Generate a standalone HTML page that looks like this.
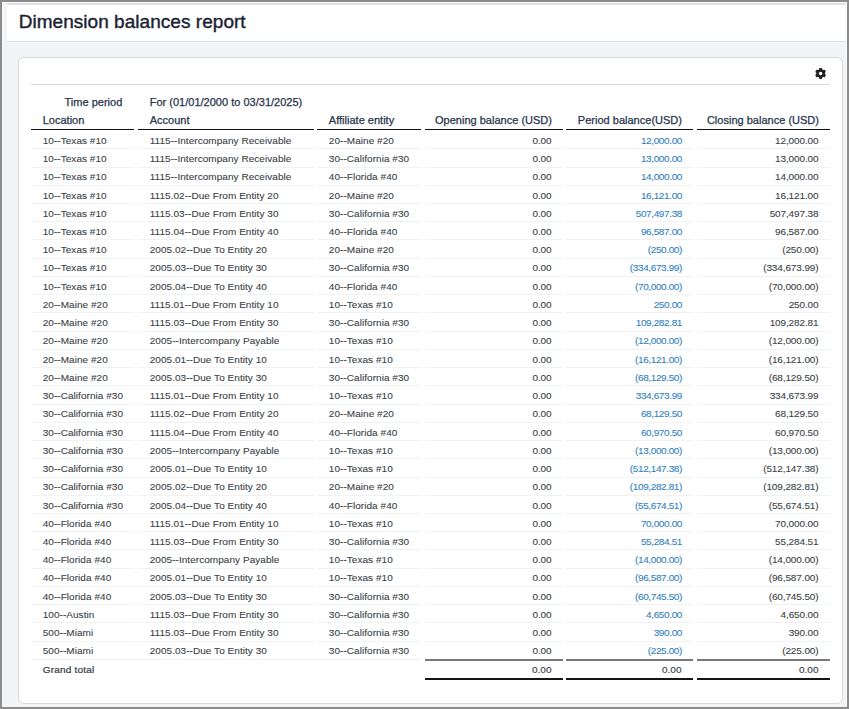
<!DOCTYPE html>
<html><head><meta charset="utf-8"><style>
html,body{margin:0;padding:0;}
body{width:849px;height:709px;position:relative;overflow:hidden;background:#8c8c8c;font-family:"Liberation Sans",sans-serif;}
.page{position:absolute;left:2px;top:2px;width:845px;height:705px;background:#f3f4f6;}
.hdr{position:absolute;left:7px;top:3px;width:839px;height:39px;background:#fff;}
.t{position:absolute;white-space:nowrap;line-height:1;}
.b{position:absolute;}
.card{position:absolute;left:18px;top:57px;width:825px;height:647px;box-sizing:border-box;border:1px solid #d6dadc;border-radius:6px;background:#fff;}
.gear{position:absolute;left:812px;top:65px;}
</style></head><body>
<div class="page"></div>
<div class="b" style="left:2px;top:2px;width:845px;height:1px;background:#fbfbfb"></div>
<div class="b" style="left:2px;top:2px;width:1px;height:705px;background:#f8f8f9"></div>
<div class="hdr"></div>
<div class="b" style="left:7px;top:3px;width:839px;height:2px;background:#e0e3e6"></div>
<div class="b" style="left:7px;top:41px;width:839px;height:1px;background:#dde4e5"></div>
<div class="b" style="left:846px;top:2px;width:1px;height:705px;background:#fafbfb"></div>
<div class="t" style="left:18.7px;top:11.82px;font-size:19px;color:#1b2333;-webkit-text-stroke:0.4px currentColor;letter-spacing:0.04px;">Dimension balances report</div>
<div class="card"></div>
<div class="b" style="left:31px;top:84px;width:799px;height:1px;background:#d6d8db"></div>
<svg class="gear" width="16" height="16" viewBox="-8 -8 16 16">
<g transform="translate(0.60,0.45)"><g fill="#222">
<circle r="4.3"/>
<rect x="-1.6" y="-5.5" width="3.2" height="11.0" rx="1.0"/>
<rect x="-1.6" y="-5.5" width="3.2" height="11.0" rx="1.0" transform="rotate(60)"/>
<rect x="-1.6" y="-5.5" width="3.2" height="11.0" rx="1.0" transform="rotate(120)"/>
</g><circle r="1.7" fill="#fff"/></g></svg>
<div class="t" style="left:64.50px;top:96.99px;font-size:11px;color:#27324a;font-weight:400;-webkit-text-stroke:0.25px currentColor;letter-spacing:0.01px;">Time period</div>
<div class="t" style="left:149.70px;top:96.99px;font-size:11px;color:#27324a;font-weight:400;-webkit-text-stroke:0.25px currentColor;letter-spacing:0.01px;">For (01/01/2000 to 03/31/2025)</div>
<div class="t" style="left:42.70px;top:115.19px;font-size:11px;color:#27324a;font-weight:400;-webkit-text-stroke:0.25px currentColor;letter-spacing:0.01px;">Location</div>
<div class="b" style="left:31.00px;top:128.70px;width:103.20px;height:1.60px;background:#111"></div>
<div class="t" style="left:149.70px;top:115.19px;font-size:11px;color:#27324a;font-weight:400;-webkit-text-stroke:0.25px currentColor;letter-spacing:0.01px;">Account</div>
<div class="b" style="left:138.00px;top:128.70px;width:175.70px;height:1.60px;background:#111"></div>
<div class="t" style="left:328.80px;top:115.19px;font-size:11px;color:#27324a;font-weight:400;-webkit-text-stroke:0.25px currentColor;letter-spacing:0.01px;">Affiliate entity</div>
<div class="b" style="left:317.10px;top:128.70px;width:103.70px;height:1.60px;background:#111"></div>
<div class="t r" style="right:297.00px;top:115.19px;font-size:11px;color:#27324a;font-weight:400;-webkit-text-stroke:0.25px currentColor;letter-spacing:0.01px;">Opening balance (USD)</div>
<div class="b" style="left:424.90px;top:128.70px;width:138.10px;height:1.60px;background:#111"></div>
<div class="t r" style="right:167.00px;top:115.19px;font-size:11px;color:#27324a;font-weight:400;-webkit-text-stroke:0.25px currentColor;letter-spacing:0.01px;">Period balance(USD)</div>
<div class="b" style="left:566.10px;top:128.70px;width:126.90px;height:1.60px;background:#111"></div>
<div class="t r" style="right:30.00px;top:115.19px;font-size:11px;color:#27324a;font-weight:400;-webkit-text-stroke:0.25px currentColor;letter-spacing:0.01px;">Closing balance (USD)</div>
<div class="b" style="left:697.00px;top:128.70px;width:133.00px;height:1.60px;background:#111"></div>
<div class="t" style="left:42.70px;top:135.84px;font-size:10px;color:#3a3f46;font-weight:400;-webkit-text-stroke:0.1px currentColor;letter-spacing:0.05px;transform:scaleY(0.88);transform-origin:0 8.46px;">10--Texas #10</div>
<div class="t" style="left:149.70px;top:135.84px;font-size:10px;color:#3a3f46;font-weight:400;-webkit-text-stroke:0.1px currentColor;letter-spacing:0.05px;transform:scaleY(0.88);transform-origin:0 8.46px;">1115--Intercompany Receivable</div>
<div class="t" style="left:328.80px;top:135.84px;font-size:10px;color:#3a3f46;font-weight:400;-webkit-text-stroke:0.1px currentColor;letter-spacing:0.05px;transform:scaleY(0.88);transform-origin:0 8.46px;">20--Maine #20</div>
<div class="t r" style="right:297.50px;top:135.84px;font-size:10px;color:#3a3f46;font-weight:400;-webkit-text-stroke:0.1px currentColor;letter-spacing:-0.12px;transform:scaleY(0.88);transform-origin:0 8.46px;">0.00</div>
<div class="t r" style="right:167.00px;top:135.84px;font-size:10px;color:#2f7fc0;font-weight:400;letter-spacing:-0.38px;-webkit-text-stroke:0.1px currentColor;transform:scaleY(0.88);transform-origin:0 8.46px;">12,000.00</div>
<div class="t r" style="right:30.50px;top:135.84px;font-size:10px;color:#3a3f46;font-weight:400;-webkit-text-stroke:0.1px currentColor;letter-spacing:-0.12px;transform:scaleY(0.88);transform-origin:0 8.46px;">12,000.00</div>
<div class="b" style="left:31.00px;top:148.30px;width:103.20px;height:1.00px;background:#f0f2f4"></div>
<div class="b" style="left:138.00px;top:148.30px;width:175.70px;height:1.00px;background:#f0f2f4"></div>
<div class="b" style="left:317.10px;top:148.30px;width:103.70px;height:1.00px;background:#f0f2f4"></div>
<div class="b" style="left:424.90px;top:148.30px;width:138.10px;height:1.00px;background:#f0f2f4"></div>
<div class="b" style="left:566.10px;top:148.30px;width:126.90px;height:1.00px;background:#f0f2f4"></div>
<div class="b" style="left:697.00px;top:148.30px;width:133.00px;height:1.00px;background:#f0f2f4"></div>
<div class="t" style="left:42.70px;top:154.07px;font-size:10px;color:#3a3f46;font-weight:400;-webkit-text-stroke:0.1px currentColor;letter-spacing:0.05px;transform:scaleY(0.88);transform-origin:0 8.46px;">10--Texas #10</div>
<div class="t" style="left:149.70px;top:154.07px;font-size:10px;color:#3a3f46;font-weight:400;-webkit-text-stroke:0.1px currentColor;letter-spacing:0.05px;transform:scaleY(0.88);transform-origin:0 8.46px;">1115--Intercompany Receivable</div>
<div class="t" style="left:328.80px;top:154.07px;font-size:10px;color:#3a3f46;font-weight:400;-webkit-text-stroke:0.1px currentColor;letter-spacing:0.05px;transform:scaleY(0.88);transform-origin:0 8.46px;">30--California #30</div>
<div class="t r" style="right:297.50px;top:154.07px;font-size:10px;color:#3a3f46;font-weight:400;-webkit-text-stroke:0.1px currentColor;letter-spacing:-0.12px;transform:scaleY(0.88);transform-origin:0 8.46px;">0.00</div>
<div class="t r" style="right:167.00px;top:154.07px;font-size:10px;color:#2f7fc0;font-weight:400;letter-spacing:-0.38px;-webkit-text-stroke:0.1px currentColor;transform:scaleY(0.88);transform-origin:0 8.46px;">13,000.00</div>
<div class="t r" style="right:30.50px;top:154.07px;font-size:10px;color:#3a3f46;font-weight:400;-webkit-text-stroke:0.1px currentColor;letter-spacing:-0.12px;transform:scaleY(0.88);transform-origin:0 8.46px;">13,000.00</div>
<div class="b" style="left:31.00px;top:166.54px;width:103.20px;height:1.00px;background:#f0f2f4"></div>
<div class="b" style="left:138.00px;top:166.54px;width:175.70px;height:1.00px;background:#f0f2f4"></div>
<div class="b" style="left:317.10px;top:166.54px;width:103.70px;height:1.00px;background:#f0f2f4"></div>
<div class="b" style="left:424.90px;top:166.54px;width:138.10px;height:1.00px;background:#f0f2f4"></div>
<div class="b" style="left:566.10px;top:166.54px;width:126.90px;height:1.00px;background:#f0f2f4"></div>
<div class="b" style="left:697.00px;top:166.54px;width:133.00px;height:1.00px;background:#f0f2f4"></div>
<div class="t" style="left:42.70px;top:172.31px;font-size:10px;color:#3a3f46;font-weight:400;-webkit-text-stroke:0.1px currentColor;letter-spacing:0.05px;transform:scaleY(0.88);transform-origin:0 8.46px;">10--Texas #10</div>
<div class="t" style="left:149.70px;top:172.31px;font-size:10px;color:#3a3f46;font-weight:400;-webkit-text-stroke:0.1px currentColor;letter-spacing:0.05px;transform:scaleY(0.88);transform-origin:0 8.46px;">1115--Intercompany Receivable</div>
<div class="t" style="left:328.80px;top:172.31px;font-size:10px;color:#3a3f46;font-weight:400;-webkit-text-stroke:0.1px currentColor;letter-spacing:0.05px;transform:scaleY(0.88);transform-origin:0 8.46px;">40--Florida #40</div>
<div class="t r" style="right:297.50px;top:172.31px;font-size:10px;color:#3a3f46;font-weight:400;-webkit-text-stroke:0.1px currentColor;letter-spacing:-0.12px;transform:scaleY(0.88);transform-origin:0 8.46px;">0.00</div>
<div class="t r" style="right:167.00px;top:172.31px;font-size:10px;color:#2f7fc0;font-weight:400;letter-spacing:-0.38px;-webkit-text-stroke:0.1px currentColor;transform:scaleY(0.88);transform-origin:0 8.46px;">14,000.00</div>
<div class="t r" style="right:30.50px;top:172.31px;font-size:10px;color:#3a3f46;font-weight:400;-webkit-text-stroke:0.1px currentColor;letter-spacing:-0.12px;transform:scaleY(0.88);transform-origin:0 8.46px;">14,000.00</div>
<div class="b" style="left:31.00px;top:184.77px;width:103.20px;height:1.00px;background:#f0f2f4"></div>
<div class="b" style="left:138.00px;top:184.77px;width:175.70px;height:1.00px;background:#f0f2f4"></div>
<div class="b" style="left:317.10px;top:184.77px;width:103.70px;height:1.00px;background:#f0f2f4"></div>
<div class="b" style="left:424.90px;top:184.77px;width:138.10px;height:1.00px;background:#f0f2f4"></div>
<div class="b" style="left:566.10px;top:184.77px;width:126.90px;height:1.00px;background:#f0f2f4"></div>
<div class="b" style="left:697.00px;top:184.77px;width:133.00px;height:1.00px;background:#f0f2f4"></div>
<div class="t" style="left:42.70px;top:190.54px;font-size:10px;color:#3a3f46;font-weight:400;-webkit-text-stroke:0.1px currentColor;letter-spacing:0.05px;transform:scaleY(0.88);transform-origin:0 8.46px;">10--Texas #10</div>
<div class="t" style="left:149.70px;top:190.54px;font-size:10px;color:#3a3f46;font-weight:400;-webkit-text-stroke:0.1px currentColor;letter-spacing:0.05px;transform:scaleY(0.88);transform-origin:0 8.46px;">1115.02--Due From Entity 20</div>
<div class="t" style="left:328.80px;top:190.54px;font-size:10px;color:#3a3f46;font-weight:400;-webkit-text-stroke:0.1px currentColor;letter-spacing:0.05px;transform:scaleY(0.88);transform-origin:0 8.46px;">20--Maine #20</div>
<div class="t r" style="right:297.50px;top:190.54px;font-size:10px;color:#3a3f46;font-weight:400;-webkit-text-stroke:0.1px currentColor;letter-spacing:-0.12px;transform:scaleY(0.88);transform-origin:0 8.46px;">0.00</div>
<div class="t r" style="right:167.00px;top:190.54px;font-size:10px;color:#2f7fc0;font-weight:400;letter-spacing:-0.38px;-webkit-text-stroke:0.1px currentColor;transform:scaleY(0.88);transform-origin:0 8.46px;">16,121.00</div>
<div class="t r" style="right:30.50px;top:190.54px;font-size:10px;color:#3a3f46;font-weight:400;-webkit-text-stroke:0.1px currentColor;letter-spacing:-0.12px;transform:scaleY(0.88);transform-origin:0 8.46px;">16,121.00</div>
<div class="b" style="left:31.00px;top:203.01px;width:103.20px;height:1.00px;background:#f0f2f4"></div>
<div class="b" style="left:138.00px;top:203.01px;width:175.70px;height:1.00px;background:#f0f2f4"></div>
<div class="b" style="left:317.10px;top:203.01px;width:103.70px;height:1.00px;background:#f0f2f4"></div>
<div class="b" style="left:424.90px;top:203.01px;width:138.10px;height:1.00px;background:#f0f2f4"></div>
<div class="b" style="left:566.10px;top:203.01px;width:126.90px;height:1.00px;background:#f0f2f4"></div>
<div class="b" style="left:697.00px;top:203.01px;width:133.00px;height:1.00px;background:#f0f2f4"></div>
<div class="t" style="left:42.70px;top:208.78px;font-size:10px;color:#3a3f46;font-weight:400;-webkit-text-stroke:0.1px currentColor;letter-spacing:0.05px;transform:scaleY(0.88);transform-origin:0 8.46px;">10--Texas #10</div>
<div class="t" style="left:149.70px;top:208.78px;font-size:10px;color:#3a3f46;font-weight:400;-webkit-text-stroke:0.1px currentColor;letter-spacing:0.05px;transform:scaleY(0.88);transform-origin:0 8.46px;">1115.03--Due From Entity 30</div>
<div class="t" style="left:328.80px;top:208.78px;font-size:10px;color:#3a3f46;font-weight:400;-webkit-text-stroke:0.1px currentColor;letter-spacing:0.05px;transform:scaleY(0.88);transform-origin:0 8.46px;">30--California #30</div>
<div class="t r" style="right:297.50px;top:208.78px;font-size:10px;color:#3a3f46;font-weight:400;-webkit-text-stroke:0.1px currentColor;letter-spacing:-0.12px;transform:scaleY(0.88);transform-origin:0 8.46px;">0.00</div>
<div class="t r" style="right:167.00px;top:208.78px;font-size:10px;color:#2f7fc0;font-weight:400;letter-spacing:-0.38px;-webkit-text-stroke:0.1px currentColor;transform:scaleY(0.88);transform-origin:0 8.46px;">507,497.38</div>
<div class="t r" style="right:30.50px;top:208.78px;font-size:10px;color:#3a3f46;font-weight:400;-webkit-text-stroke:0.1px currentColor;letter-spacing:-0.12px;transform:scaleY(0.88);transform-origin:0 8.46px;">507,497.38</div>
<div class="b" style="left:31.00px;top:221.24px;width:103.20px;height:1.00px;background:#f0f2f4"></div>
<div class="b" style="left:138.00px;top:221.24px;width:175.70px;height:1.00px;background:#f0f2f4"></div>
<div class="b" style="left:317.10px;top:221.24px;width:103.70px;height:1.00px;background:#f0f2f4"></div>
<div class="b" style="left:424.90px;top:221.24px;width:138.10px;height:1.00px;background:#f0f2f4"></div>
<div class="b" style="left:566.10px;top:221.24px;width:126.90px;height:1.00px;background:#f0f2f4"></div>
<div class="b" style="left:697.00px;top:221.24px;width:133.00px;height:1.00px;background:#f0f2f4"></div>
<div class="t" style="left:42.70px;top:227.01px;font-size:10px;color:#3a3f46;font-weight:400;-webkit-text-stroke:0.1px currentColor;letter-spacing:0.05px;transform:scaleY(0.88);transform-origin:0 8.46px;">10--Texas #10</div>
<div class="t" style="left:149.70px;top:227.01px;font-size:10px;color:#3a3f46;font-weight:400;-webkit-text-stroke:0.1px currentColor;letter-spacing:0.05px;transform:scaleY(0.88);transform-origin:0 8.46px;">1115.04--Due From Entity 40</div>
<div class="t" style="left:328.80px;top:227.01px;font-size:10px;color:#3a3f46;font-weight:400;-webkit-text-stroke:0.1px currentColor;letter-spacing:0.05px;transform:scaleY(0.88);transform-origin:0 8.46px;">40--Florida #40</div>
<div class="t r" style="right:297.50px;top:227.01px;font-size:10px;color:#3a3f46;font-weight:400;-webkit-text-stroke:0.1px currentColor;letter-spacing:-0.12px;transform:scaleY(0.88);transform-origin:0 8.46px;">0.00</div>
<div class="t r" style="right:167.00px;top:227.01px;font-size:10px;color:#2f7fc0;font-weight:400;letter-spacing:-0.38px;-webkit-text-stroke:0.1px currentColor;transform:scaleY(0.88);transform-origin:0 8.46px;">96,587.00</div>
<div class="t r" style="right:30.50px;top:227.01px;font-size:10px;color:#3a3f46;font-weight:400;-webkit-text-stroke:0.1px currentColor;letter-spacing:-0.12px;transform:scaleY(0.88);transform-origin:0 8.46px;">96,587.00</div>
<div class="b" style="left:31.00px;top:239.48px;width:103.20px;height:1.00px;background:#f0f2f4"></div>
<div class="b" style="left:138.00px;top:239.48px;width:175.70px;height:1.00px;background:#f0f2f4"></div>
<div class="b" style="left:317.10px;top:239.48px;width:103.70px;height:1.00px;background:#f0f2f4"></div>
<div class="b" style="left:424.90px;top:239.48px;width:138.10px;height:1.00px;background:#f0f2f4"></div>
<div class="b" style="left:566.10px;top:239.48px;width:126.90px;height:1.00px;background:#f0f2f4"></div>
<div class="b" style="left:697.00px;top:239.48px;width:133.00px;height:1.00px;background:#f0f2f4"></div>
<div class="t" style="left:42.70px;top:245.25px;font-size:10px;color:#3a3f46;font-weight:400;-webkit-text-stroke:0.1px currentColor;letter-spacing:0.05px;transform:scaleY(0.88);transform-origin:0 8.46px;">10--Texas #10</div>
<div class="t" style="left:149.70px;top:245.25px;font-size:10px;color:#3a3f46;font-weight:400;-webkit-text-stroke:0.1px currentColor;letter-spacing:0.05px;transform:scaleY(0.88);transform-origin:0 8.46px;">2005.02--Due To Entity 20</div>
<div class="t" style="left:328.80px;top:245.25px;font-size:10px;color:#3a3f46;font-weight:400;-webkit-text-stroke:0.1px currentColor;letter-spacing:0.05px;transform:scaleY(0.88);transform-origin:0 8.46px;">20--Maine #20</div>
<div class="t r" style="right:297.50px;top:245.25px;font-size:10px;color:#3a3f46;font-weight:400;-webkit-text-stroke:0.1px currentColor;letter-spacing:-0.12px;transform:scaleY(0.88);transform-origin:0 8.46px;">0.00</div>
<div class="t r" style="right:167.00px;top:245.25px;font-size:10px;color:#2f7fc0;font-weight:400;letter-spacing:-0.38px;-webkit-text-stroke:0.1px currentColor;transform:scaleY(0.88);transform-origin:0 8.46px;">(250.00)</div>
<div class="t r" style="right:30.50px;top:245.25px;font-size:10px;color:#3a3f46;font-weight:400;-webkit-text-stroke:0.1px currentColor;letter-spacing:-0.12px;transform:scaleY(0.88);transform-origin:0 8.46px;">(250.00)</div>
<div class="b" style="left:31.00px;top:257.71px;width:103.20px;height:1.00px;background:#f0f2f4"></div>
<div class="b" style="left:138.00px;top:257.71px;width:175.70px;height:1.00px;background:#f0f2f4"></div>
<div class="b" style="left:317.10px;top:257.71px;width:103.70px;height:1.00px;background:#f0f2f4"></div>
<div class="b" style="left:424.90px;top:257.71px;width:138.10px;height:1.00px;background:#f0f2f4"></div>
<div class="b" style="left:566.10px;top:257.71px;width:126.90px;height:1.00px;background:#f0f2f4"></div>
<div class="b" style="left:697.00px;top:257.71px;width:133.00px;height:1.00px;background:#f0f2f4"></div>
<div class="t" style="left:42.70px;top:263.48px;font-size:10px;color:#3a3f46;font-weight:400;-webkit-text-stroke:0.1px currentColor;letter-spacing:0.05px;transform:scaleY(0.88);transform-origin:0 8.46px;">10--Texas #10</div>
<div class="t" style="left:149.70px;top:263.48px;font-size:10px;color:#3a3f46;font-weight:400;-webkit-text-stroke:0.1px currentColor;letter-spacing:0.05px;transform:scaleY(0.88);transform-origin:0 8.46px;">2005.03--Due To Entity 30</div>
<div class="t" style="left:328.80px;top:263.48px;font-size:10px;color:#3a3f46;font-weight:400;-webkit-text-stroke:0.1px currentColor;letter-spacing:0.05px;transform:scaleY(0.88);transform-origin:0 8.46px;">30--California #30</div>
<div class="t r" style="right:297.50px;top:263.48px;font-size:10px;color:#3a3f46;font-weight:400;-webkit-text-stroke:0.1px currentColor;letter-spacing:-0.12px;transform:scaleY(0.88);transform-origin:0 8.46px;">0.00</div>
<div class="t r" style="right:167.00px;top:263.48px;font-size:10px;color:#2f7fc0;font-weight:400;letter-spacing:-0.38px;-webkit-text-stroke:0.1px currentColor;transform:scaleY(0.88);transform-origin:0 8.46px;">(334,673.99)</div>
<div class="t r" style="right:30.50px;top:263.48px;font-size:10px;color:#3a3f46;font-weight:400;-webkit-text-stroke:0.1px currentColor;letter-spacing:-0.12px;transform:scaleY(0.88);transform-origin:0 8.46px;">(334,673.99)</div>
<div class="b" style="left:31.00px;top:275.95px;width:103.20px;height:1.00px;background:#f0f2f4"></div>
<div class="b" style="left:138.00px;top:275.95px;width:175.70px;height:1.00px;background:#f0f2f4"></div>
<div class="b" style="left:317.10px;top:275.95px;width:103.70px;height:1.00px;background:#f0f2f4"></div>
<div class="b" style="left:424.90px;top:275.95px;width:138.10px;height:1.00px;background:#f0f2f4"></div>
<div class="b" style="left:566.10px;top:275.95px;width:126.90px;height:1.00px;background:#f0f2f4"></div>
<div class="b" style="left:697.00px;top:275.95px;width:133.00px;height:1.00px;background:#f0f2f4"></div>
<div class="t" style="left:42.70px;top:281.72px;font-size:10px;color:#3a3f46;font-weight:400;-webkit-text-stroke:0.1px currentColor;letter-spacing:0.05px;transform:scaleY(0.88);transform-origin:0 8.46px;">10--Texas #10</div>
<div class="t" style="left:149.70px;top:281.72px;font-size:10px;color:#3a3f46;font-weight:400;-webkit-text-stroke:0.1px currentColor;letter-spacing:0.05px;transform:scaleY(0.88);transform-origin:0 8.46px;">2005.04--Due To Entity 40</div>
<div class="t" style="left:328.80px;top:281.72px;font-size:10px;color:#3a3f46;font-weight:400;-webkit-text-stroke:0.1px currentColor;letter-spacing:0.05px;transform:scaleY(0.88);transform-origin:0 8.46px;">40--Florida #40</div>
<div class="t r" style="right:297.50px;top:281.72px;font-size:10px;color:#3a3f46;font-weight:400;-webkit-text-stroke:0.1px currentColor;letter-spacing:-0.12px;transform:scaleY(0.88);transform-origin:0 8.46px;">0.00</div>
<div class="t r" style="right:167.00px;top:281.72px;font-size:10px;color:#2f7fc0;font-weight:400;letter-spacing:-0.38px;-webkit-text-stroke:0.1px currentColor;transform:scaleY(0.88);transform-origin:0 8.46px;">(70,000.00)</div>
<div class="t r" style="right:30.50px;top:281.72px;font-size:10px;color:#3a3f46;font-weight:400;-webkit-text-stroke:0.1px currentColor;letter-spacing:-0.12px;transform:scaleY(0.88);transform-origin:0 8.46px;">(70,000.00)</div>
<div class="b" style="left:31.00px;top:294.18px;width:103.20px;height:1.00px;background:#f0f2f4"></div>
<div class="b" style="left:138.00px;top:294.18px;width:175.70px;height:1.00px;background:#f0f2f4"></div>
<div class="b" style="left:317.10px;top:294.18px;width:103.70px;height:1.00px;background:#f0f2f4"></div>
<div class="b" style="left:424.90px;top:294.18px;width:138.10px;height:1.00px;background:#f0f2f4"></div>
<div class="b" style="left:566.10px;top:294.18px;width:126.90px;height:1.00px;background:#f0f2f4"></div>
<div class="b" style="left:697.00px;top:294.18px;width:133.00px;height:1.00px;background:#f0f2f4"></div>
<div class="t" style="left:42.70px;top:299.95px;font-size:10px;color:#3a3f46;font-weight:400;-webkit-text-stroke:0.1px currentColor;letter-spacing:0.05px;transform:scaleY(0.88);transform-origin:0 8.46px;">20--Maine #20</div>
<div class="t" style="left:149.70px;top:299.95px;font-size:10px;color:#3a3f46;font-weight:400;-webkit-text-stroke:0.1px currentColor;letter-spacing:0.05px;transform:scaleY(0.88);transform-origin:0 8.46px;">1115.01--Due From Entity 10</div>
<div class="t" style="left:328.80px;top:299.95px;font-size:10px;color:#3a3f46;font-weight:400;-webkit-text-stroke:0.1px currentColor;letter-spacing:0.05px;transform:scaleY(0.88);transform-origin:0 8.46px;">10--Texas #10</div>
<div class="t r" style="right:297.50px;top:299.95px;font-size:10px;color:#3a3f46;font-weight:400;-webkit-text-stroke:0.1px currentColor;letter-spacing:-0.12px;transform:scaleY(0.88);transform-origin:0 8.46px;">0.00</div>
<div class="t r" style="right:167.00px;top:299.95px;font-size:10px;color:#2f7fc0;font-weight:400;letter-spacing:-0.38px;-webkit-text-stroke:0.1px currentColor;transform:scaleY(0.88);transform-origin:0 8.46px;">250.00</div>
<div class="t r" style="right:30.50px;top:299.95px;font-size:10px;color:#3a3f46;font-weight:400;-webkit-text-stroke:0.1px currentColor;letter-spacing:-0.12px;transform:scaleY(0.88);transform-origin:0 8.46px;">250.00</div>
<div class="b" style="left:31.00px;top:312.42px;width:103.20px;height:1.00px;background:#f0f2f4"></div>
<div class="b" style="left:138.00px;top:312.42px;width:175.70px;height:1.00px;background:#f0f2f4"></div>
<div class="b" style="left:317.10px;top:312.42px;width:103.70px;height:1.00px;background:#f0f2f4"></div>
<div class="b" style="left:424.90px;top:312.42px;width:138.10px;height:1.00px;background:#f0f2f4"></div>
<div class="b" style="left:566.10px;top:312.42px;width:126.90px;height:1.00px;background:#f0f2f4"></div>
<div class="b" style="left:697.00px;top:312.42px;width:133.00px;height:1.00px;background:#f0f2f4"></div>
<div class="t" style="left:42.70px;top:318.19px;font-size:10px;color:#3a3f46;font-weight:400;-webkit-text-stroke:0.1px currentColor;letter-spacing:0.05px;transform:scaleY(0.88);transform-origin:0 8.46px;">20--Maine #20</div>
<div class="t" style="left:149.70px;top:318.19px;font-size:10px;color:#3a3f46;font-weight:400;-webkit-text-stroke:0.1px currentColor;letter-spacing:0.05px;transform:scaleY(0.88);transform-origin:0 8.46px;">1115.03--Due From Entity 30</div>
<div class="t" style="left:328.80px;top:318.19px;font-size:10px;color:#3a3f46;font-weight:400;-webkit-text-stroke:0.1px currentColor;letter-spacing:0.05px;transform:scaleY(0.88);transform-origin:0 8.46px;">30--California #30</div>
<div class="t r" style="right:297.50px;top:318.19px;font-size:10px;color:#3a3f46;font-weight:400;-webkit-text-stroke:0.1px currentColor;letter-spacing:-0.12px;transform:scaleY(0.88);transform-origin:0 8.46px;">0.00</div>
<div class="t r" style="right:167.00px;top:318.19px;font-size:10px;color:#2f7fc0;font-weight:400;letter-spacing:-0.38px;-webkit-text-stroke:0.1px currentColor;transform:scaleY(0.88);transform-origin:0 8.46px;">109,282.81</div>
<div class="t r" style="right:30.50px;top:318.19px;font-size:10px;color:#3a3f46;font-weight:400;-webkit-text-stroke:0.1px currentColor;letter-spacing:-0.12px;transform:scaleY(0.88);transform-origin:0 8.46px;">109,282.81</div>
<div class="b" style="left:31.00px;top:330.65px;width:103.20px;height:1.00px;background:#f0f2f4"></div>
<div class="b" style="left:138.00px;top:330.65px;width:175.70px;height:1.00px;background:#f0f2f4"></div>
<div class="b" style="left:317.10px;top:330.65px;width:103.70px;height:1.00px;background:#f0f2f4"></div>
<div class="b" style="left:424.90px;top:330.65px;width:138.10px;height:1.00px;background:#f0f2f4"></div>
<div class="b" style="left:566.10px;top:330.65px;width:126.90px;height:1.00px;background:#f0f2f4"></div>
<div class="b" style="left:697.00px;top:330.65px;width:133.00px;height:1.00px;background:#f0f2f4"></div>
<div class="t" style="left:42.70px;top:336.43px;font-size:10px;color:#3a3f46;font-weight:400;-webkit-text-stroke:0.1px currentColor;letter-spacing:0.05px;transform:scaleY(0.88);transform-origin:0 8.46px;">20--Maine #20</div>
<div class="t" style="left:149.70px;top:336.43px;font-size:10px;color:#3a3f46;font-weight:400;-webkit-text-stroke:0.1px currentColor;letter-spacing:0.05px;transform:scaleY(0.88);transform-origin:0 8.46px;">2005--Intercompany Payable</div>
<div class="t" style="left:328.80px;top:336.43px;font-size:10px;color:#3a3f46;font-weight:400;-webkit-text-stroke:0.1px currentColor;letter-spacing:0.05px;transform:scaleY(0.88);transform-origin:0 8.46px;">10--Texas #10</div>
<div class="t r" style="right:297.50px;top:336.43px;font-size:10px;color:#3a3f46;font-weight:400;-webkit-text-stroke:0.1px currentColor;letter-spacing:-0.12px;transform:scaleY(0.88);transform-origin:0 8.46px;">0.00</div>
<div class="t r" style="right:167.00px;top:336.43px;font-size:10px;color:#2f7fc0;font-weight:400;letter-spacing:-0.38px;-webkit-text-stroke:0.1px currentColor;transform:scaleY(0.88);transform-origin:0 8.46px;">(12,000.00)</div>
<div class="t r" style="right:30.50px;top:336.43px;font-size:10px;color:#3a3f46;font-weight:400;-webkit-text-stroke:0.1px currentColor;letter-spacing:-0.12px;transform:scaleY(0.88);transform-origin:0 8.46px;">(12,000.00)</div>
<div class="b" style="left:31.00px;top:348.89px;width:103.20px;height:1.00px;background:#f0f2f4"></div>
<div class="b" style="left:138.00px;top:348.89px;width:175.70px;height:1.00px;background:#f0f2f4"></div>
<div class="b" style="left:317.10px;top:348.89px;width:103.70px;height:1.00px;background:#f0f2f4"></div>
<div class="b" style="left:424.90px;top:348.89px;width:138.10px;height:1.00px;background:#f0f2f4"></div>
<div class="b" style="left:566.10px;top:348.89px;width:126.90px;height:1.00px;background:#f0f2f4"></div>
<div class="b" style="left:697.00px;top:348.89px;width:133.00px;height:1.00px;background:#f0f2f4"></div>
<div class="t" style="left:42.70px;top:354.66px;font-size:10px;color:#3a3f46;font-weight:400;-webkit-text-stroke:0.1px currentColor;letter-spacing:0.05px;transform:scaleY(0.88);transform-origin:0 8.46px;">20--Maine #20</div>
<div class="t" style="left:149.70px;top:354.66px;font-size:10px;color:#3a3f46;font-weight:400;-webkit-text-stroke:0.1px currentColor;letter-spacing:0.05px;transform:scaleY(0.88);transform-origin:0 8.46px;">2005.01--Due To Entity 10</div>
<div class="t" style="left:328.80px;top:354.66px;font-size:10px;color:#3a3f46;font-weight:400;-webkit-text-stroke:0.1px currentColor;letter-spacing:0.05px;transform:scaleY(0.88);transform-origin:0 8.46px;">10--Texas #10</div>
<div class="t r" style="right:297.50px;top:354.66px;font-size:10px;color:#3a3f46;font-weight:400;-webkit-text-stroke:0.1px currentColor;letter-spacing:-0.12px;transform:scaleY(0.88);transform-origin:0 8.46px;">0.00</div>
<div class="t r" style="right:167.00px;top:354.66px;font-size:10px;color:#2f7fc0;font-weight:400;letter-spacing:-0.38px;-webkit-text-stroke:0.1px currentColor;transform:scaleY(0.88);transform-origin:0 8.46px;">(16,121.00)</div>
<div class="t r" style="right:30.50px;top:354.66px;font-size:10px;color:#3a3f46;font-weight:400;-webkit-text-stroke:0.1px currentColor;letter-spacing:-0.12px;transform:scaleY(0.88);transform-origin:0 8.46px;">(16,121.00)</div>
<div class="b" style="left:31.00px;top:367.13px;width:103.20px;height:1.00px;background:#f0f2f4"></div>
<div class="b" style="left:138.00px;top:367.13px;width:175.70px;height:1.00px;background:#f0f2f4"></div>
<div class="b" style="left:317.10px;top:367.13px;width:103.70px;height:1.00px;background:#f0f2f4"></div>
<div class="b" style="left:424.90px;top:367.13px;width:138.10px;height:1.00px;background:#f0f2f4"></div>
<div class="b" style="left:566.10px;top:367.13px;width:126.90px;height:1.00px;background:#f0f2f4"></div>
<div class="b" style="left:697.00px;top:367.13px;width:133.00px;height:1.00px;background:#f0f2f4"></div>
<div class="t" style="left:42.70px;top:372.90px;font-size:10px;color:#3a3f46;font-weight:400;-webkit-text-stroke:0.1px currentColor;letter-spacing:0.05px;transform:scaleY(0.88);transform-origin:0 8.46px;">20--Maine #20</div>
<div class="t" style="left:149.70px;top:372.90px;font-size:10px;color:#3a3f46;font-weight:400;-webkit-text-stroke:0.1px currentColor;letter-spacing:0.05px;transform:scaleY(0.88);transform-origin:0 8.46px;">2005.03--Due To Entity 30</div>
<div class="t" style="left:328.80px;top:372.90px;font-size:10px;color:#3a3f46;font-weight:400;-webkit-text-stroke:0.1px currentColor;letter-spacing:0.05px;transform:scaleY(0.88);transform-origin:0 8.46px;">30--California #30</div>
<div class="t r" style="right:297.50px;top:372.90px;font-size:10px;color:#3a3f46;font-weight:400;-webkit-text-stroke:0.1px currentColor;letter-spacing:-0.12px;transform:scaleY(0.88);transform-origin:0 8.46px;">0.00</div>
<div class="t r" style="right:167.00px;top:372.90px;font-size:10px;color:#2f7fc0;font-weight:400;letter-spacing:-0.38px;-webkit-text-stroke:0.1px currentColor;transform:scaleY(0.88);transform-origin:0 8.46px;">(68,129.50)</div>
<div class="t r" style="right:30.50px;top:372.90px;font-size:10px;color:#3a3f46;font-weight:400;-webkit-text-stroke:0.1px currentColor;letter-spacing:-0.12px;transform:scaleY(0.88);transform-origin:0 8.46px;">(68,129.50)</div>
<div class="b" style="left:31.00px;top:385.36px;width:103.20px;height:1.00px;background:#f0f2f4"></div>
<div class="b" style="left:138.00px;top:385.36px;width:175.70px;height:1.00px;background:#f0f2f4"></div>
<div class="b" style="left:317.10px;top:385.36px;width:103.70px;height:1.00px;background:#f0f2f4"></div>
<div class="b" style="left:424.90px;top:385.36px;width:138.10px;height:1.00px;background:#f0f2f4"></div>
<div class="b" style="left:566.10px;top:385.36px;width:126.90px;height:1.00px;background:#f0f2f4"></div>
<div class="b" style="left:697.00px;top:385.36px;width:133.00px;height:1.00px;background:#f0f2f4"></div>
<div class="t" style="left:42.70px;top:391.13px;font-size:10px;color:#3a3f46;font-weight:400;-webkit-text-stroke:0.1px currentColor;letter-spacing:0.05px;transform:scaleY(0.88);transform-origin:0 8.46px;">30--California #30</div>
<div class="t" style="left:149.70px;top:391.13px;font-size:10px;color:#3a3f46;font-weight:400;-webkit-text-stroke:0.1px currentColor;letter-spacing:0.05px;transform:scaleY(0.88);transform-origin:0 8.46px;">1115.01--Due From Entity 10</div>
<div class="t" style="left:328.80px;top:391.13px;font-size:10px;color:#3a3f46;font-weight:400;-webkit-text-stroke:0.1px currentColor;letter-spacing:0.05px;transform:scaleY(0.88);transform-origin:0 8.46px;">10--Texas #10</div>
<div class="t r" style="right:297.50px;top:391.13px;font-size:10px;color:#3a3f46;font-weight:400;-webkit-text-stroke:0.1px currentColor;letter-spacing:-0.12px;transform:scaleY(0.88);transform-origin:0 8.46px;">0.00</div>
<div class="t r" style="right:167.00px;top:391.13px;font-size:10px;color:#2f7fc0;font-weight:400;letter-spacing:-0.38px;-webkit-text-stroke:0.1px currentColor;transform:scaleY(0.88);transform-origin:0 8.46px;">334,673.99</div>
<div class="t r" style="right:30.50px;top:391.13px;font-size:10px;color:#3a3f46;font-weight:400;-webkit-text-stroke:0.1px currentColor;letter-spacing:-0.12px;transform:scaleY(0.88);transform-origin:0 8.46px;">334,673.99</div>
<div class="b" style="left:31.00px;top:403.60px;width:103.20px;height:1.00px;background:#f0f2f4"></div>
<div class="b" style="left:138.00px;top:403.60px;width:175.70px;height:1.00px;background:#f0f2f4"></div>
<div class="b" style="left:317.10px;top:403.60px;width:103.70px;height:1.00px;background:#f0f2f4"></div>
<div class="b" style="left:424.90px;top:403.60px;width:138.10px;height:1.00px;background:#f0f2f4"></div>
<div class="b" style="left:566.10px;top:403.60px;width:126.90px;height:1.00px;background:#f0f2f4"></div>
<div class="b" style="left:697.00px;top:403.60px;width:133.00px;height:1.00px;background:#f0f2f4"></div>
<div class="t" style="left:42.70px;top:409.37px;font-size:10px;color:#3a3f46;font-weight:400;-webkit-text-stroke:0.1px currentColor;letter-spacing:0.05px;transform:scaleY(0.88);transform-origin:0 8.46px;">30--California #30</div>
<div class="t" style="left:149.70px;top:409.37px;font-size:10px;color:#3a3f46;font-weight:400;-webkit-text-stroke:0.1px currentColor;letter-spacing:0.05px;transform:scaleY(0.88);transform-origin:0 8.46px;">1115.02--Due From Entity 20</div>
<div class="t" style="left:328.80px;top:409.37px;font-size:10px;color:#3a3f46;font-weight:400;-webkit-text-stroke:0.1px currentColor;letter-spacing:0.05px;transform:scaleY(0.88);transform-origin:0 8.46px;">20--Maine #20</div>
<div class="t r" style="right:297.50px;top:409.37px;font-size:10px;color:#3a3f46;font-weight:400;-webkit-text-stroke:0.1px currentColor;letter-spacing:-0.12px;transform:scaleY(0.88);transform-origin:0 8.46px;">0.00</div>
<div class="t r" style="right:167.00px;top:409.37px;font-size:10px;color:#2f7fc0;font-weight:400;letter-spacing:-0.38px;-webkit-text-stroke:0.1px currentColor;transform:scaleY(0.88);transform-origin:0 8.46px;">68,129.50</div>
<div class="t r" style="right:30.50px;top:409.37px;font-size:10px;color:#3a3f46;font-weight:400;-webkit-text-stroke:0.1px currentColor;letter-spacing:-0.12px;transform:scaleY(0.88);transform-origin:0 8.46px;">68,129.50</div>
<div class="b" style="left:31.00px;top:421.83px;width:103.20px;height:1.00px;background:#f0f2f4"></div>
<div class="b" style="left:138.00px;top:421.83px;width:175.70px;height:1.00px;background:#f0f2f4"></div>
<div class="b" style="left:317.10px;top:421.83px;width:103.70px;height:1.00px;background:#f0f2f4"></div>
<div class="b" style="left:424.90px;top:421.83px;width:138.10px;height:1.00px;background:#f0f2f4"></div>
<div class="b" style="left:566.10px;top:421.83px;width:126.90px;height:1.00px;background:#f0f2f4"></div>
<div class="b" style="left:697.00px;top:421.83px;width:133.00px;height:1.00px;background:#f0f2f4"></div>
<div class="t" style="left:42.70px;top:427.60px;font-size:10px;color:#3a3f46;font-weight:400;-webkit-text-stroke:0.1px currentColor;letter-spacing:0.05px;transform:scaleY(0.88);transform-origin:0 8.46px;">30--California #30</div>
<div class="t" style="left:149.70px;top:427.60px;font-size:10px;color:#3a3f46;font-weight:400;-webkit-text-stroke:0.1px currentColor;letter-spacing:0.05px;transform:scaleY(0.88);transform-origin:0 8.46px;">1115.04--Due From Entity 40</div>
<div class="t" style="left:328.80px;top:427.60px;font-size:10px;color:#3a3f46;font-weight:400;-webkit-text-stroke:0.1px currentColor;letter-spacing:0.05px;transform:scaleY(0.88);transform-origin:0 8.46px;">40--Florida #40</div>
<div class="t r" style="right:297.50px;top:427.60px;font-size:10px;color:#3a3f46;font-weight:400;-webkit-text-stroke:0.1px currentColor;letter-spacing:-0.12px;transform:scaleY(0.88);transform-origin:0 8.46px;">0.00</div>
<div class="t r" style="right:167.00px;top:427.60px;font-size:10px;color:#2f7fc0;font-weight:400;letter-spacing:-0.38px;-webkit-text-stroke:0.1px currentColor;transform:scaleY(0.88);transform-origin:0 8.46px;">60,970.50</div>
<div class="t r" style="right:30.50px;top:427.60px;font-size:10px;color:#3a3f46;font-weight:400;-webkit-text-stroke:0.1px currentColor;letter-spacing:-0.12px;transform:scaleY(0.88);transform-origin:0 8.46px;">60,970.50</div>
<div class="b" style="left:31.00px;top:440.07px;width:103.20px;height:1.00px;background:#f0f2f4"></div>
<div class="b" style="left:138.00px;top:440.07px;width:175.70px;height:1.00px;background:#f0f2f4"></div>
<div class="b" style="left:317.10px;top:440.07px;width:103.70px;height:1.00px;background:#f0f2f4"></div>
<div class="b" style="left:424.90px;top:440.07px;width:138.10px;height:1.00px;background:#f0f2f4"></div>
<div class="b" style="left:566.10px;top:440.07px;width:126.90px;height:1.00px;background:#f0f2f4"></div>
<div class="b" style="left:697.00px;top:440.07px;width:133.00px;height:1.00px;background:#f0f2f4"></div>
<div class="t" style="left:42.70px;top:445.84px;font-size:10px;color:#3a3f46;font-weight:400;-webkit-text-stroke:0.1px currentColor;letter-spacing:0.05px;transform:scaleY(0.88);transform-origin:0 8.46px;">30--California #30</div>
<div class="t" style="left:149.70px;top:445.84px;font-size:10px;color:#3a3f46;font-weight:400;-webkit-text-stroke:0.1px currentColor;letter-spacing:0.05px;transform:scaleY(0.88);transform-origin:0 8.46px;">2005--Intercompany Payable</div>
<div class="t" style="left:328.80px;top:445.84px;font-size:10px;color:#3a3f46;font-weight:400;-webkit-text-stroke:0.1px currentColor;letter-spacing:0.05px;transform:scaleY(0.88);transform-origin:0 8.46px;">10--Texas #10</div>
<div class="t r" style="right:297.50px;top:445.84px;font-size:10px;color:#3a3f46;font-weight:400;-webkit-text-stroke:0.1px currentColor;letter-spacing:-0.12px;transform:scaleY(0.88);transform-origin:0 8.46px;">0.00</div>
<div class="t r" style="right:167.00px;top:445.84px;font-size:10px;color:#2f7fc0;font-weight:400;letter-spacing:-0.38px;-webkit-text-stroke:0.1px currentColor;transform:scaleY(0.88);transform-origin:0 8.46px;">(13,000.00)</div>
<div class="t r" style="right:30.50px;top:445.84px;font-size:10px;color:#3a3f46;font-weight:400;-webkit-text-stroke:0.1px currentColor;letter-spacing:-0.12px;transform:scaleY(0.88);transform-origin:0 8.46px;">(13,000.00)</div>
<div class="b" style="left:31.00px;top:458.30px;width:103.20px;height:1.00px;background:#f0f2f4"></div>
<div class="b" style="left:138.00px;top:458.30px;width:175.70px;height:1.00px;background:#f0f2f4"></div>
<div class="b" style="left:317.10px;top:458.30px;width:103.70px;height:1.00px;background:#f0f2f4"></div>
<div class="b" style="left:424.90px;top:458.30px;width:138.10px;height:1.00px;background:#f0f2f4"></div>
<div class="b" style="left:566.10px;top:458.30px;width:126.90px;height:1.00px;background:#f0f2f4"></div>
<div class="b" style="left:697.00px;top:458.30px;width:133.00px;height:1.00px;background:#f0f2f4"></div>
<div class="t" style="left:42.70px;top:464.07px;font-size:10px;color:#3a3f46;font-weight:400;-webkit-text-stroke:0.1px currentColor;letter-spacing:0.05px;transform:scaleY(0.88);transform-origin:0 8.46px;">30--California #30</div>
<div class="t" style="left:149.70px;top:464.07px;font-size:10px;color:#3a3f46;font-weight:400;-webkit-text-stroke:0.1px currentColor;letter-spacing:0.05px;transform:scaleY(0.88);transform-origin:0 8.46px;">2005.01--Due To Entity 10</div>
<div class="t" style="left:328.80px;top:464.07px;font-size:10px;color:#3a3f46;font-weight:400;-webkit-text-stroke:0.1px currentColor;letter-spacing:0.05px;transform:scaleY(0.88);transform-origin:0 8.46px;">10--Texas #10</div>
<div class="t r" style="right:297.50px;top:464.07px;font-size:10px;color:#3a3f46;font-weight:400;-webkit-text-stroke:0.1px currentColor;letter-spacing:-0.12px;transform:scaleY(0.88);transform-origin:0 8.46px;">0.00</div>
<div class="t r" style="right:167.00px;top:464.07px;font-size:10px;color:#2f7fc0;font-weight:400;letter-spacing:-0.38px;-webkit-text-stroke:0.1px currentColor;transform:scaleY(0.88);transform-origin:0 8.46px;">(512,147.38)</div>
<div class="t r" style="right:30.50px;top:464.07px;font-size:10px;color:#3a3f46;font-weight:400;-webkit-text-stroke:0.1px currentColor;letter-spacing:-0.12px;transform:scaleY(0.88);transform-origin:0 8.46px;">(512,147.38)</div>
<div class="b" style="left:31.00px;top:476.54px;width:103.20px;height:1.00px;background:#f0f2f4"></div>
<div class="b" style="left:138.00px;top:476.54px;width:175.70px;height:1.00px;background:#f0f2f4"></div>
<div class="b" style="left:317.10px;top:476.54px;width:103.70px;height:1.00px;background:#f0f2f4"></div>
<div class="b" style="left:424.90px;top:476.54px;width:138.10px;height:1.00px;background:#f0f2f4"></div>
<div class="b" style="left:566.10px;top:476.54px;width:126.90px;height:1.00px;background:#f0f2f4"></div>
<div class="b" style="left:697.00px;top:476.54px;width:133.00px;height:1.00px;background:#f0f2f4"></div>
<div class="t" style="left:42.70px;top:482.31px;font-size:10px;color:#3a3f46;font-weight:400;-webkit-text-stroke:0.1px currentColor;letter-spacing:0.05px;transform:scaleY(0.88);transform-origin:0 8.46px;">30--California #30</div>
<div class="t" style="left:149.70px;top:482.31px;font-size:10px;color:#3a3f46;font-weight:400;-webkit-text-stroke:0.1px currentColor;letter-spacing:0.05px;transform:scaleY(0.88);transform-origin:0 8.46px;">2005.02--Due To Entity 20</div>
<div class="t" style="left:328.80px;top:482.31px;font-size:10px;color:#3a3f46;font-weight:400;-webkit-text-stroke:0.1px currentColor;letter-spacing:0.05px;transform:scaleY(0.88);transform-origin:0 8.46px;">20--Maine #20</div>
<div class="t r" style="right:297.50px;top:482.31px;font-size:10px;color:#3a3f46;font-weight:400;-webkit-text-stroke:0.1px currentColor;letter-spacing:-0.12px;transform:scaleY(0.88);transform-origin:0 8.46px;">0.00</div>
<div class="t r" style="right:167.00px;top:482.31px;font-size:10px;color:#2f7fc0;font-weight:400;letter-spacing:-0.38px;-webkit-text-stroke:0.1px currentColor;transform:scaleY(0.88);transform-origin:0 8.46px;">(109,282.81)</div>
<div class="t r" style="right:30.50px;top:482.31px;font-size:10px;color:#3a3f46;font-weight:400;-webkit-text-stroke:0.1px currentColor;letter-spacing:-0.12px;transform:scaleY(0.88);transform-origin:0 8.46px;">(109,282.81)</div>
<div class="b" style="left:31.00px;top:494.77px;width:103.20px;height:1.00px;background:#f0f2f4"></div>
<div class="b" style="left:138.00px;top:494.77px;width:175.70px;height:1.00px;background:#f0f2f4"></div>
<div class="b" style="left:317.10px;top:494.77px;width:103.70px;height:1.00px;background:#f0f2f4"></div>
<div class="b" style="left:424.90px;top:494.77px;width:138.10px;height:1.00px;background:#f0f2f4"></div>
<div class="b" style="left:566.10px;top:494.77px;width:126.90px;height:1.00px;background:#f0f2f4"></div>
<div class="b" style="left:697.00px;top:494.77px;width:133.00px;height:1.00px;background:#f0f2f4"></div>
<div class="t" style="left:42.70px;top:500.55px;font-size:10px;color:#3a3f46;font-weight:400;-webkit-text-stroke:0.1px currentColor;letter-spacing:0.05px;transform:scaleY(0.88);transform-origin:0 8.46px;">30--California #30</div>
<div class="t" style="left:149.70px;top:500.55px;font-size:10px;color:#3a3f46;font-weight:400;-webkit-text-stroke:0.1px currentColor;letter-spacing:0.05px;transform:scaleY(0.88);transform-origin:0 8.46px;">2005.04--Due To Entity 40</div>
<div class="t" style="left:328.80px;top:500.55px;font-size:10px;color:#3a3f46;font-weight:400;-webkit-text-stroke:0.1px currentColor;letter-spacing:0.05px;transform:scaleY(0.88);transform-origin:0 8.46px;">40--Florida #40</div>
<div class="t r" style="right:297.50px;top:500.55px;font-size:10px;color:#3a3f46;font-weight:400;-webkit-text-stroke:0.1px currentColor;letter-spacing:-0.12px;transform:scaleY(0.88);transform-origin:0 8.46px;">0.00</div>
<div class="t r" style="right:167.00px;top:500.55px;font-size:10px;color:#2f7fc0;font-weight:400;letter-spacing:-0.38px;-webkit-text-stroke:0.1px currentColor;transform:scaleY(0.88);transform-origin:0 8.46px;">(55,674.51)</div>
<div class="t r" style="right:30.50px;top:500.55px;font-size:10px;color:#3a3f46;font-weight:400;-webkit-text-stroke:0.1px currentColor;letter-spacing:-0.12px;transform:scaleY(0.88);transform-origin:0 8.46px;">(55,674.51)</div>
<div class="b" style="left:31.00px;top:513.01px;width:103.20px;height:1.00px;background:#f0f2f4"></div>
<div class="b" style="left:138.00px;top:513.01px;width:175.70px;height:1.00px;background:#f0f2f4"></div>
<div class="b" style="left:317.10px;top:513.01px;width:103.70px;height:1.00px;background:#f0f2f4"></div>
<div class="b" style="left:424.90px;top:513.01px;width:138.10px;height:1.00px;background:#f0f2f4"></div>
<div class="b" style="left:566.10px;top:513.01px;width:126.90px;height:1.00px;background:#f0f2f4"></div>
<div class="b" style="left:697.00px;top:513.01px;width:133.00px;height:1.00px;background:#f0f2f4"></div>
<div class="t" style="left:42.70px;top:518.78px;font-size:10px;color:#3a3f46;font-weight:400;-webkit-text-stroke:0.1px currentColor;letter-spacing:0.05px;transform:scaleY(0.88);transform-origin:0 8.46px;">40--Florida #40</div>
<div class="t" style="left:149.70px;top:518.78px;font-size:10px;color:#3a3f46;font-weight:400;-webkit-text-stroke:0.1px currentColor;letter-spacing:0.05px;transform:scaleY(0.88);transform-origin:0 8.46px;">1115.01--Due From Entity 10</div>
<div class="t" style="left:328.80px;top:518.78px;font-size:10px;color:#3a3f46;font-weight:400;-webkit-text-stroke:0.1px currentColor;letter-spacing:0.05px;transform:scaleY(0.88);transform-origin:0 8.46px;">10--Texas #10</div>
<div class="t r" style="right:297.50px;top:518.78px;font-size:10px;color:#3a3f46;font-weight:400;-webkit-text-stroke:0.1px currentColor;letter-spacing:-0.12px;transform:scaleY(0.88);transform-origin:0 8.46px;">0.00</div>
<div class="t r" style="right:167.00px;top:518.78px;font-size:10px;color:#2f7fc0;font-weight:400;letter-spacing:-0.38px;-webkit-text-stroke:0.1px currentColor;transform:scaleY(0.88);transform-origin:0 8.46px;">70,000.00</div>
<div class="t r" style="right:30.50px;top:518.78px;font-size:10px;color:#3a3f46;font-weight:400;-webkit-text-stroke:0.1px currentColor;letter-spacing:-0.12px;transform:scaleY(0.88);transform-origin:0 8.46px;">70,000.00</div>
<div class="b" style="left:31.00px;top:531.25px;width:103.20px;height:1.00px;background:#f0f2f4"></div>
<div class="b" style="left:138.00px;top:531.25px;width:175.70px;height:1.00px;background:#f0f2f4"></div>
<div class="b" style="left:317.10px;top:531.25px;width:103.70px;height:1.00px;background:#f0f2f4"></div>
<div class="b" style="left:424.90px;top:531.25px;width:138.10px;height:1.00px;background:#f0f2f4"></div>
<div class="b" style="left:566.10px;top:531.25px;width:126.90px;height:1.00px;background:#f0f2f4"></div>
<div class="b" style="left:697.00px;top:531.25px;width:133.00px;height:1.00px;background:#f0f2f4"></div>
<div class="t" style="left:42.70px;top:537.02px;font-size:10px;color:#3a3f46;font-weight:400;-webkit-text-stroke:0.1px currentColor;letter-spacing:0.05px;transform:scaleY(0.88);transform-origin:0 8.46px;">40--Florida #40</div>
<div class="t" style="left:149.70px;top:537.02px;font-size:10px;color:#3a3f46;font-weight:400;-webkit-text-stroke:0.1px currentColor;letter-spacing:0.05px;transform:scaleY(0.88);transform-origin:0 8.46px;">1115.03--Due From Entity 30</div>
<div class="t" style="left:328.80px;top:537.02px;font-size:10px;color:#3a3f46;font-weight:400;-webkit-text-stroke:0.1px currentColor;letter-spacing:0.05px;transform:scaleY(0.88);transform-origin:0 8.46px;">30--California #30</div>
<div class="t r" style="right:297.50px;top:537.02px;font-size:10px;color:#3a3f46;font-weight:400;-webkit-text-stroke:0.1px currentColor;letter-spacing:-0.12px;transform:scaleY(0.88);transform-origin:0 8.46px;">0.00</div>
<div class="t r" style="right:167.00px;top:537.02px;font-size:10px;color:#2f7fc0;font-weight:400;letter-spacing:-0.38px;-webkit-text-stroke:0.1px currentColor;transform:scaleY(0.88);transform-origin:0 8.46px;">55,284.51</div>
<div class="t r" style="right:30.50px;top:537.02px;font-size:10px;color:#3a3f46;font-weight:400;-webkit-text-stroke:0.1px currentColor;letter-spacing:-0.12px;transform:scaleY(0.88);transform-origin:0 8.46px;">55,284.51</div>
<div class="b" style="left:31.00px;top:549.48px;width:103.20px;height:1.00px;background:#f0f2f4"></div>
<div class="b" style="left:138.00px;top:549.48px;width:175.70px;height:1.00px;background:#f0f2f4"></div>
<div class="b" style="left:317.10px;top:549.48px;width:103.70px;height:1.00px;background:#f0f2f4"></div>
<div class="b" style="left:424.90px;top:549.48px;width:138.10px;height:1.00px;background:#f0f2f4"></div>
<div class="b" style="left:566.10px;top:549.48px;width:126.90px;height:1.00px;background:#f0f2f4"></div>
<div class="b" style="left:697.00px;top:549.48px;width:133.00px;height:1.00px;background:#f0f2f4"></div>
<div class="t" style="left:42.70px;top:555.25px;font-size:10px;color:#3a3f46;font-weight:400;-webkit-text-stroke:0.1px currentColor;letter-spacing:0.05px;transform:scaleY(0.88);transform-origin:0 8.46px;">40--Florida #40</div>
<div class="t" style="left:149.70px;top:555.25px;font-size:10px;color:#3a3f46;font-weight:400;-webkit-text-stroke:0.1px currentColor;letter-spacing:0.05px;transform:scaleY(0.88);transform-origin:0 8.46px;">2005--Intercompany Payable</div>
<div class="t" style="left:328.80px;top:555.25px;font-size:10px;color:#3a3f46;font-weight:400;-webkit-text-stroke:0.1px currentColor;letter-spacing:0.05px;transform:scaleY(0.88);transform-origin:0 8.46px;">10--Texas #10</div>
<div class="t r" style="right:297.50px;top:555.25px;font-size:10px;color:#3a3f46;font-weight:400;-webkit-text-stroke:0.1px currentColor;letter-spacing:-0.12px;transform:scaleY(0.88);transform-origin:0 8.46px;">0.00</div>
<div class="t r" style="right:167.00px;top:555.25px;font-size:10px;color:#2f7fc0;font-weight:400;letter-spacing:-0.38px;-webkit-text-stroke:0.1px currentColor;transform:scaleY(0.88);transform-origin:0 8.46px;">(14,000.00)</div>
<div class="t r" style="right:30.50px;top:555.25px;font-size:10px;color:#3a3f46;font-weight:400;-webkit-text-stroke:0.1px currentColor;letter-spacing:-0.12px;transform:scaleY(0.88);transform-origin:0 8.46px;">(14,000.00)</div>
<div class="b" style="left:31.00px;top:567.72px;width:103.20px;height:1.00px;background:#f0f2f4"></div>
<div class="b" style="left:138.00px;top:567.72px;width:175.70px;height:1.00px;background:#f0f2f4"></div>
<div class="b" style="left:317.10px;top:567.72px;width:103.70px;height:1.00px;background:#f0f2f4"></div>
<div class="b" style="left:424.90px;top:567.72px;width:138.10px;height:1.00px;background:#f0f2f4"></div>
<div class="b" style="left:566.10px;top:567.72px;width:126.90px;height:1.00px;background:#f0f2f4"></div>
<div class="b" style="left:697.00px;top:567.72px;width:133.00px;height:1.00px;background:#f0f2f4"></div>
<div class="t" style="left:42.70px;top:573.49px;font-size:10px;color:#3a3f46;font-weight:400;-webkit-text-stroke:0.1px currentColor;letter-spacing:0.05px;transform:scaleY(0.88);transform-origin:0 8.46px;">40--Florida #40</div>
<div class="t" style="left:149.70px;top:573.49px;font-size:10px;color:#3a3f46;font-weight:400;-webkit-text-stroke:0.1px currentColor;letter-spacing:0.05px;transform:scaleY(0.88);transform-origin:0 8.46px;">2005.01--Due To Entity 10</div>
<div class="t" style="left:328.80px;top:573.49px;font-size:10px;color:#3a3f46;font-weight:400;-webkit-text-stroke:0.1px currentColor;letter-spacing:0.05px;transform:scaleY(0.88);transform-origin:0 8.46px;">10--Texas #10</div>
<div class="t r" style="right:297.50px;top:573.49px;font-size:10px;color:#3a3f46;font-weight:400;-webkit-text-stroke:0.1px currentColor;letter-spacing:-0.12px;transform:scaleY(0.88);transform-origin:0 8.46px;">0.00</div>
<div class="t r" style="right:167.00px;top:573.49px;font-size:10px;color:#2f7fc0;font-weight:400;letter-spacing:-0.38px;-webkit-text-stroke:0.1px currentColor;transform:scaleY(0.88);transform-origin:0 8.46px;">(96,587.00)</div>
<div class="t r" style="right:30.50px;top:573.49px;font-size:10px;color:#3a3f46;font-weight:400;-webkit-text-stroke:0.1px currentColor;letter-spacing:-0.12px;transform:scaleY(0.88);transform-origin:0 8.46px;">(96,587.00)</div>
<div class="b" style="left:31.00px;top:585.95px;width:103.20px;height:1.00px;background:#f0f2f4"></div>
<div class="b" style="left:138.00px;top:585.95px;width:175.70px;height:1.00px;background:#f0f2f4"></div>
<div class="b" style="left:317.10px;top:585.95px;width:103.70px;height:1.00px;background:#f0f2f4"></div>
<div class="b" style="left:424.90px;top:585.95px;width:138.10px;height:1.00px;background:#f0f2f4"></div>
<div class="b" style="left:566.10px;top:585.95px;width:126.90px;height:1.00px;background:#f0f2f4"></div>
<div class="b" style="left:697.00px;top:585.95px;width:133.00px;height:1.00px;background:#f0f2f4"></div>
<div class="t" style="left:42.70px;top:591.72px;font-size:10px;color:#3a3f46;font-weight:400;-webkit-text-stroke:0.1px currentColor;letter-spacing:0.05px;transform:scaleY(0.88);transform-origin:0 8.46px;">40--Florida #40</div>
<div class="t" style="left:149.70px;top:591.72px;font-size:10px;color:#3a3f46;font-weight:400;-webkit-text-stroke:0.1px currentColor;letter-spacing:0.05px;transform:scaleY(0.88);transform-origin:0 8.46px;">2005.03--Due To Entity 30</div>
<div class="t" style="left:328.80px;top:591.72px;font-size:10px;color:#3a3f46;font-weight:400;-webkit-text-stroke:0.1px currentColor;letter-spacing:0.05px;transform:scaleY(0.88);transform-origin:0 8.46px;">30--California #30</div>
<div class="t r" style="right:297.50px;top:591.72px;font-size:10px;color:#3a3f46;font-weight:400;-webkit-text-stroke:0.1px currentColor;letter-spacing:-0.12px;transform:scaleY(0.88);transform-origin:0 8.46px;">0.00</div>
<div class="t r" style="right:167.00px;top:591.72px;font-size:10px;color:#2f7fc0;font-weight:400;letter-spacing:-0.38px;-webkit-text-stroke:0.1px currentColor;transform:scaleY(0.88);transform-origin:0 8.46px;">(60,745.50)</div>
<div class="t r" style="right:30.50px;top:591.72px;font-size:10px;color:#3a3f46;font-weight:400;-webkit-text-stroke:0.1px currentColor;letter-spacing:-0.12px;transform:scaleY(0.88);transform-origin:0 8.46px;">(60,745.50)</div>
<div class="b" style="left:31.00px;top:604.19px;width:103.20px;height:1.00px;background:#f0f2f4"></div>
<div class="b" style="left:138.00px;top:604.19px;width:175.70px;height:1.00px;background:#f0f2f4"></div>
<div class="b" style="left:317.10px;top:604.19px;width:103.70px;height:1.00px;background:#f0f2f4"></div>
<div class="b" style="left:424.90px;top:604.19px;width:138.10px;height:1.00px;background:#f0f2f4"></div>
<div class="b" style="left:566.10px;top:604.19px;width:126.90px;height:1.00px;background:#f0f2f4"></div>
<div class="b" style="left:697.00px;top:604.19px;width:133.00px;height:1.00px;background:#f0f2f4"></div>
<div class="t" style="left:42.70px;top:609.96px;font-size:10px;color:#3a3f46;font-weight:400;-webkit-text-stroke:0.1px currentColor;letter-spacing:0.05px;transform:scaleY(0.88);transform-origin:0 8.46px;">100--Austin</div>
<div class="t" style="left:149.70px;top:609.96px;font-size:10px;color:#3a3f46;font-weight:400;-webkit-text-stroke:0.1px currentColor;letter-spacing:0.05px;transform:scaleY(0.88);transform-origin:0 8.46px;">1115.03--Due From Entity 30</div>
<div class="t" style="left:328.80px;top:609.96px;font-size:10px;color:#3a3f46;font-weight:400;-webkit-text-stroke:0.1px currentColor;letter-spacing:0.05px;transform:scaleY(0.88);transform-origin:0 8.46px;">30--California #30</div>
<div class="t r" style="right:297.50px;top:609.96px;font-size:10px;color:#3a3f46;font-weight:400;-webkit-text-stroke:0.1px currentColor;letter-spacing:-0.12px;transform:scaleY(0.88);transform-origin:0 8.46px;">0.00</div>
<div class="t r" style="right:167.00px;top:609.96px;font-size:10px;color:#2f7fc0;font-weight:400;letter-spacing:-0.38px;-webkit-text-stroke:0.1px currentColor;transform:scaleY(0.88);transform-origin:0 8.46px;">4,650.00</div>
<div class="t r" style="right:30.50px;top:609.96px;font-size:10px;color:#3a3f46;font-weight:400;-webkit-text-stroke:0.1px currentColor;letter-spacing:-0.12px;transform:scaleY(0.88);transform-origin:0 8.46px;">4,650.00</div>
<div class="b" style="left:31.00px;top:622.42px;width:103.20px;height:1.00px;background:#f0f2f4"></div>
<div class="b" style="left:138.00px;top:622.42px;width:175.70px;height:1.00px;background:#f0f2f4"></div>
<div class="b" style="left:317.10px;top:622.42px;width:103.70px;height:1.00px;background:#f0f2f4"></div>
<div class="b" style="left:424.90px;top:622.42px;width:138.10px;height:1.00px;background:#f0f2f4"></div>
<div class="b" style="left:566.10px;top:622.42px;width:126.90px;height:1.00px;background:#f0f2f4"></div>
<div class="b" style="left:697.00px;top:622.42px;width:133.00px;height:1.00px;background:#f0f2f4"></div>
<div class="t" style="left:42.70px;top:628.19px;font-size:10px;color:#3a3f46;font-weight:400;-webkit-text-stroke:0.1px currentColor;letter-spacing:0.05px;transform:scaleY(0.88);transform-origin:0 8.46px;">500--Miami</div>
<div class="t" style="left:149.70px;top:628.19px;font-size:10px;color:#3a3f46;font-weight:400;-webkit-text-stroke:0.1px currentColor;letter-spacing:0.05px;transform:scaleY(0.88);transform-origin:0 8.46px;">1115.03--Due From Entity 30</div>
<div class="t" style="left:328.80px;top:628.19px;font-size:10px;color:#3a3f46;font-weight:400;-webkit-text-stroke:0.1px currentColor;letter-spacing:0.05px;transform:scaleY(0.88);transform-origin:0 8.46px;">30--California #30</div>
<div class="t r" style="right:297.50px;top:628.19px;font-size:10px;color:#3a3f46;font-weight:400;-webkit-text-stroke:0.1px currentColor;letter-spacing:-0.12px;transform:scaleY(0.88);transform-origin:0 8.46px;">0.00</div>
<div class="t r" style="right:167.00px;top:628.19px;font-size:10px;color:#2f7fc0;font-weight:400;letter-spacing:-0.38px;-webkit-text-stroke:0.1px currentColor;transform:scaleY(0.88);transform-origin:0 8.46px;">390.00</div>
<div class="t r" style="right:30.50px;top:628.19px;font-size:10px;color:#3a3f46;font-weight:400;-webkit-text-stroke:0.1px currentColor;letter-spacing:-0.12px;transform:scaleY(0.88);transform-origin:0 8.46px;">390.00</div>
<div class="b" style="left:31.00px;top:640.66px;width:103.20px;height:1.00px;background:#f0f2f4"></div>
<div class="b" style="left:138.00px;top:640.66px;width:175.70px;height:1.00px;background:#f0f2f4"></div>
<div class="b" style="left:317.10px;top:640.66px;width:103.70px;height:1.00px;background:#f0f2f4"></div>
<div class="b" style="left:424.90px;top:640.66px;width:138.10px;height:1.00px;background:#f0f2f4"></div>
<div class="b" style="left:566.10px;top:640.66px;width:126.90px;height:1.00px;background:#f0f2f4"></div>
<div class="b" style="left:697.00px;top:640.66px;width:133.00px;height:1.00px;background:#f0f2f4"></div>
<div class="t" style="left:42.70px;top:646.43px;font-size:10px;color:#3a3f46;font-weight:400;-webkit-text-stroke:0.1px currentColor;letter-spacing:0.05px;transform:scaleY(0.88);transform-origin:0 8.46px;">500--Miami</div>
<div class="t" style="left:149.70px;top:646.43px;font-size:10px;color:#3a3f46;font-weight:400;-webkit-text-stroke:0.1px currentColor;letter-spacing:0.05px;transform:scaleY(0.88);transform-origin:0 8.46px;">2005.03--Due To Entity 30</div>
<div class="t" style="left:328.80px;top:646.43px;font-size:10px;color:#3a3f46;font-weight:400;-webkit-text-stroke:0.1px currentColor;letter-spacing:0.05px;transform:scaleY(0.88);transform-origin:0 8.46px;">30--California #30</div>
<div class="t r" style="right:297.50px;top:646.43px;font-size:10px;color:#3a3f46;font-weight:400;-webkit-text-stroke:0.1px currentColor;letter-spacing:-0.12px;transform:scaleY(0.88);transform-origin:0 8.46px;">0.00</div>
<div class="t r" style="right:167.00px;top:646.43px;font-size:10px;color:#2f7fc0;font-weight:400;letter-spacing:-0.38px;-webkit-text-stroke:0.1px currentColor;transform:scaleY(0.88);transform-origin:0 8.46px;">(225.00)</div>
<div class="t r" style="right:30.50px;top:646.43px;font-size:10px;color:#3a3f46;font-weight:400;-webkit-text-stroke:0.1px currentColor;letter-spacing:-0.12px;transform:scaleY(0.88);transform-origin:0 8.46px;">(225.00)</div>
<div class="b" style="left:31.00px;top:658.89px;width:389.80px;height:1.00px;background:#f0f2f4"></div>
<div class="b" style="left:424.90px;top:658.89px;width:138.10px;height:2.00px;background:#7a7a7a"></div>
<div class="b" style="left:566.10px;top:658.89px;width:126.90px;height:2.00px;background:#7a7a7a"></div>
<div class="b" style="left:697.00px;top:658.89px;width:133.00px;height:2.00px;background:#7a7a7a"></div>
<div class="t" style="left:42.70px;top:664.66px;font-size:10px;color:#3a3f46;font-weight:400;-webkit-text-stroke:0.25px currentColor;letter-spacing:0.2px;transform:scaleY(0.88);transform-origin:0 8.46px;">Grand total</div>
<div class="t r" style="right:297.50px;top:664.66px;font-size:10px;color:#3a3f46;font-weight:400;-webkit-text-stroke:0.15px currentColor;transform:scaleY(0.88);transform-origin:0 8.46px;">0.00</div>
<div class="b" style="left:424.90px;top:677.73px;width:138.10px;height:2.00px;background:#151515"></div>
<div class="t r" style="right:167.50px;top:664.66px;font-size:10px;color:#3a3f46;font-weight:400;-webkit-text-stroke:0.15px currentColor;transform:scaleY(0.88);transform-origin:0 8.46px;">0.00</div>
<div class="b" style="left:566.10px;top:677.73px;width:126.90px;height:2.00px;background:#151515"></div>
<div class="t r" style="right:30.50px;top:664.66px;font-size:10px;color:#3a3f46;font-weight:400;-webkit-text-stroke:0.15px currentColor;transform:scaleY(0.88);transform-origin:0 8.46px;">0.00</div>
<div class="b" style="left:697.00px;top:677.73px;width:133.00px;height:2.00px;background:#151515"></div>
</body></html>
